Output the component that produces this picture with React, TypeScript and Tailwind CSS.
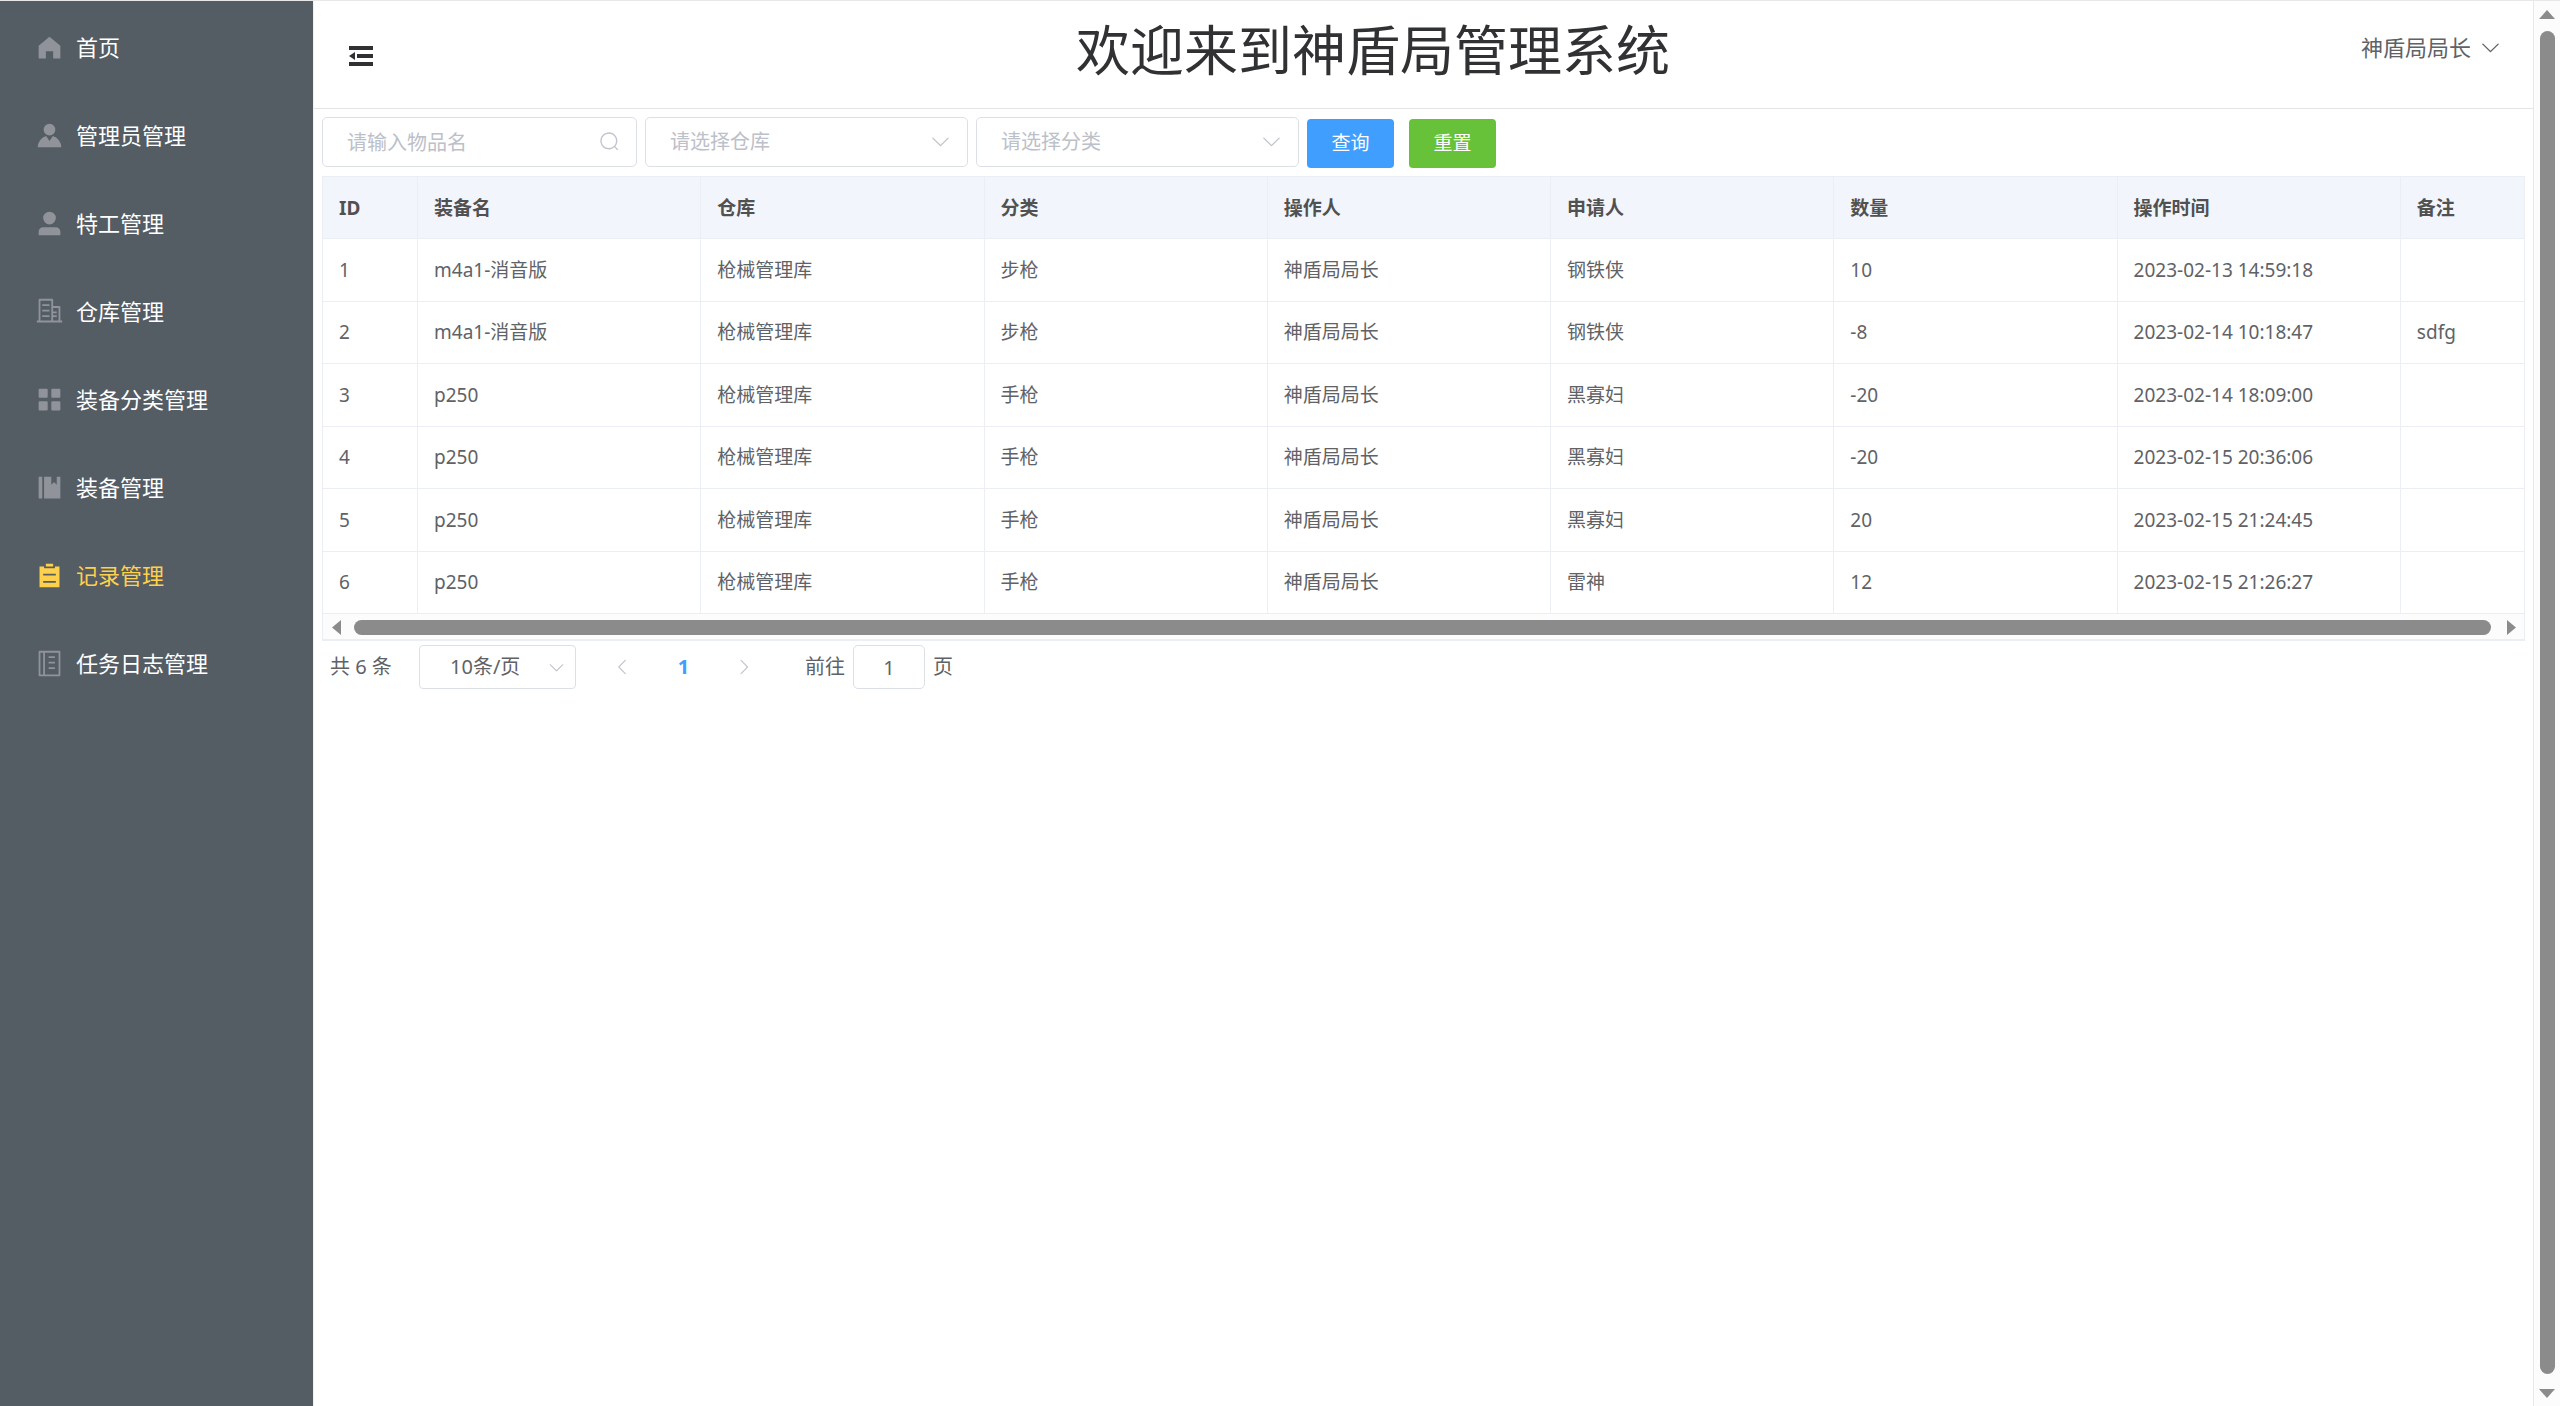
import type { ReactNode } from 'react';

const paths = {
  home: 'M512 128 128 447.936V896h255.936V640H640v256h255.936V447.936z',
  avatar:
    'M628.736 528.896A416 416 0 0 1 928 928H96a415.872 415.872 0 0 1 299.264-399.104L512 704zM720 304a208 208 0 1 1-416 0 208 208 0 0 1 416 0',
  user: 'M288 320a224 224 0 1 0 448 0 224 224 0 1 0-448 0m544 608H160a32 32 0 0 1-32-32v-96a160 160 0 0 1 160-160h448a160 160 0 0 1 160 160v96a32 32 0 0 1-32 32z',
  office:
    'M192 128v704h384V128zm-32-64h448a32 32 0 0 1 32 32v768a32 32 0 0 1-32 32H160a32 32 0 0 1-32-32V96a32 32 0 0 1 32-32M256 256h256v64H256zm0 192h256v64H256zm0 192h256v64H256zm384-128h128v64H640zm0 128h128v64H640zM64 832h896v64H64zM640 384v448h192V384zm-32-64h256a32 32 0 0 1 32 32v512a32 32 0 0 1-32 32H608a32 32 0 0 1-32-32V352a32 32 0 0 1 32-32',
  menu: 'M160 448a32 32 0 0 1-32-32V160a32 32 0 0 1 32-32h256a32 32 0 0 1 32 32V416a32 32 0 0 1-32 32zm448 0a32 32 0 0 1-32-32V160a32 32 0 0 1 32-32h256a32 32 0 0 1 32 32V416a32 32 0 0 1-32 32zM160 896a32 32 0 0 1-32-32V608a32 32 0 0 1 32-32h256a32 32 0 0 1 32 32v256a32 32 0 0 1-32 32zm448 0a32 32 0 0 1-32-32V608a32 32 0 0 1 32-32h256a32 32 0 0 1 32 32v256a32 32 0 0 1-32 32z',
  management: 'M576 128v288l96-96 96 96V128h128v768H320V128zm-448 0h128v768H128z',
  list: 'M704 192h160v736H160V192h160v64h384zM288 512h448v-64H288zm0 256h448v-64H288zm96-576V96h256v96z',
  memo: 'M160 64h704a32 32 0 0 1 32 32v832a32 32 0 0 1-32 32H160a32 32 0 0 1-32-32V96a32 32 0 0 1 32-32M192 128v768h96V128zM352 128v768h480V128zM480 256h224v64H480zM480 448h224v64H480zM480 640h224v64H480z',
  fold: 'M896 192H128v128h768zm0 256H384v128h512zm0 256H128v128h768zM320 384 128 512l192 128z',
  down: 'M831.872 340.864 512 652.672 192.128 340.864a30.592 30.592 0 0 0-42.752 0 29.12 29.12 0 0 0 0 41.6L489.664 714.24a32 32 0 0 0 44.672 0l340.288-331.712a29.12 29.12 0 0 0 0-41.728 30.592 30.592 0 0 0-42.752 0z',
  left: 'M609.408 149.376 277.76 489.6a32 32 0 0 0 0 44.672l331.648 340.352a29.12 29.12 0 0 0 41.728 0 30.592 30.592 0 0 0 0-42.752L339.264 511.936l311.872-319.872a30.592 30.592 0 0 0 0-42.688 29.12 29.12 0 0 0-41.728 0z',
  right:
    'M340.864 149.312a30.592 30.592 0 0 0 0 42.752L652.736 512 340.864 831.872a30.592 30.592 0 0 0 0 42.752 29.12 29.12 0 0 0 41.728 0L714.24 534.336a32 32 0 0 0 0-44.672L382.592 149.376a29.12 29.12 0 0 0-41.728 0z',
  search:
    'm795.904 750.72 124.992 124.928a32 32 0 0 1-45.248 45.248L750.656 795.904a416 416 0 1 1 45.248-45.184M480 832a352 352 0 1 0 0-704 352 352 0 0 0 0 704',
};

type IconName = keyof typeof paths;

const Icon = ({ name, className }: { name: IconName; className: string }) => (
  <svg viewBox="0 0 1024 1024" fill="currentColor" fillRule={name === 'memo' ? 'evenodd' : 'nonzero'} className={className} aria-hidden="true">
    <path d={paths[name]} />
  </svg>
);

const menu: { icon: IconName; label: string }[] = [
  { icon: 'home', label: '首页' },
  { icon: 'avatar', label: '管理员管理' },
  { icon: 'user', label: '特工管理' },
  { icon: 'office', label: '仓库管理' },
  { icon: 'menu', label: '装备分类管理' },
  { icon: 'management', label: '装备管理' },
  { icon: 'list', label: '记录管理' },
  { icon: 'memo', label: '任务日志管理' },
];

const columns = ['ID', '装备名', '仓库', '分类', '操作人', '申请人', '数量', '操作时间', '备注'];

const records = [
  ['1', 'm4a1-消音版', '枪械管理库', '步枪', '神盾局局长', '钢铁侠', '10', '2023-02-13 14:59:18', ''],
  ['2', 'm4a1-消音版', '枪械管理库', '步枪', '神盾局局长', '钢铁侠', '-8', '2023-02-14 10:18:47', 'sdfg'],
  ['3', 'p250', '枪械管理库', '手枪', '神盾局局长', '黑寡妇', '-20', '2023-02-14 18:09:00', ''],
  ['4', 'p250', '枪械管理库', '手枪', '神盾局局长', '黑寡妇', '-20', '2023-02-15 20:36:06', ''],
  ['5', 'p250', '枪械管理库', '手枪', '神盾局局长', '黑寡妇', '20', '2023-02-15 21:24:45', ''],
  ['6', 'p250', '枪械管理库', '手枪', '神盾局局长', '雷神', '12', '2023-02-15 21:26:27', ''],
];

const Sidebar = () => (
  <aside className="w-[313px] shrink-0 bg-[#545c64] pt-[2px]">
    <nav>
      {menu.map((item) => {
        const active = item.label === '记录管理';
        return (
          <a
            key={item.label}
            href="#"
            aria-current={active ? 'page' : undefined}
            className={`flex h-[88px] items-center gap-[12px] pl-[35px] text-[22px] ${active ? 'text-[#ffd04b]' : 'text-white'}`}
          >
            <Icon name={item.icon} className={`size-[29px] ${active ? '' : 'text-[#909399]'}`} />
            {item.label}
          </a>
        );
      })}
    </nav>
  </aside>
);

const Header = () => (
  <header className="flex h-[108px] items-start border-b border-[#e4e4e4] px-[31px] text-[#303133]">
    <button type="button" aria-label="折叠菜单" className="mt-[39px] w-[40px]">
      <Icon name="fold" className="size-[32px]" />
    </button>
    <h1 className="flex-1 pt-[13px] text-center text-[54px] leading-[72px]">欢迎来到神盾局管理系统</h1>
    <button type="button" className="mt-[30px] flex items-center gap-[8px] text-[22px] leading-[32px] text-[#606266]">
      神盾局局长
      <Icon name="down" className="size-[23px]" />
    </button>
  </header>
);

const FilterSelect = ({ label }: { label: string }) => (
  <div className="relative w-[323px]">
    <select
      aria-label={label}
      className="h-[50px] w-full appearance-none rounded-[5px] border border-[#dcdfe6] bg-white px-[24px] text-[20px] text-[#bcc0c8]"
    >
      <option>{label}</option>
    </select>
    <Icon name="down" className="pointer-events-none absolute top-[13px] right-[16px] size-[23px] text-[#c0c4cc]" />
  </div>
);

const Filters = () => (
  <form className="flex h-[67px] items-start gap-[8px] pt-[8px]">
    <div className="relative w-[315px]">
      <input
        type="text"
        aria-label="物品名"
        placeholder="请输入物品名"
        className="h-[50px] w-full rounded-[5px] border border-[#dcdfe6] px-[24px] text-[20px] placeholder:text-[#bcc0c8]"
      />
      <Icon name="search" className="pointer-events-none absolute top-[14px] right-[17px] size-[21px] text-[#c0c4cc]" />
    </div>
    <FilterSelect label="请选择仓库" />
    <FilterSelect label="请选择分类" />
    <div className="flex gap-[15px] pt-[2px]">
      <button type="button" className="h-[49px] w-[87px] rounded-[4px] bg-[#409eff] text-[19px] text-white">
        查询
      </button>
      <button type="button" className="h-[49px] w-[87px] rounded-[4px] bg-[#67c23a] text-[19px] text-white">
        重置
      </button>
    </div>
  </form>
);

const RecordTable = () => (
  <div className="overflow-hidden border border-b-2 border-[#ebeef5]">
    <table className="w-full table-fixed border-separate border-spacing-0 text-left text-[19px] text-[#606266]">
      <colgroup>
        {columns.map((c, i) => (
          <col key={c} className={i === 0 ? 'w-[95px]' : i < 8 ? 'w-[12.87%]' : ''} />
        ))}
      </colgroup>
      <thead className="bg-[#f2f5fc] text-[#515151]">
        <tr className="h-[62px]">
          {columns.map((c) => (
            <Cell key={c} head>
              {c}
            </Cell>
          ))}
        </tr>
      </thead>
      <tbody>
        {records.map((row) => (
          <tr key={row[0]} className="odd:h-[63px] even:h-[62px]">
            {row.map((value, i) => (
              <Cell key={columns[i]}>{value}</Cell>
            ))}
          </tr>
        ))}
      </tbody>
    </table>
    <div className="flex h-[25px] items-end bg-[#fcfcfc] pr-[8px] pb-[4px] pl-[9px] text-[#8b8b8b]" aria-hidden="true">
      <svg viewBox="0 0 9 15" fill="currentColor" className="h-[15px] w-[9px]">
        <path d="M9 0v15L0 7.500z" />
      </svg>
      <div className="mr-[16px] ml-[13px] h-[15px] flex-1 rounded-full bg-[#8b8b8b]" />
      <svg viewBox="0 0 9 15" fill="currentColor" className="h-[15px] w-[9px]">
        <path d="M0 0v15l9-7.500z" />
      </svg>
    </div>
  </div>
);

const Cell = ({ head, children }: { head?: boolean; children: ReactNode }) =>
  head ? (
    <th className="border-r border-b border-[#ebeef5] px-[16px] pt-[2px] pb-0 font-bold last:border-r-0">{children}</th>
  ) : (
    <td className="border-r border-b border-[#ebeef5] px-[16px] py-0 last:border-r-0">{children}</td>
  );

const Pagination = () => (
  <div className="flex items-center pt-[4px] pl-[8px] text-[20px] text-[#606266]">
    <span className="w-[89px]">共 6 条</span>
    <div className="relative w-[157px]">
      <select
        aria-label="每页条数"
        className="h-[44px] w-full appearance-none rounded-[4px] border border-[#dcdfe6] bg-white pl-[30px] text-[20px]"
      >
        <option>10条/页</option>
      </select>
      <Icon name="down" className="pointer-events-none absolute top-[13px] right-[10px] size-[19px] text-[#c0c4cc]" />
    </div>
    <button type="button" aria-label="上一页" className="ml-[37px] text-[#c0c4cc]">
      <Icon name="left" className="size-[20px]" />
    </button>
    <button type="button" className="w-[101px] font-bold text-[#409eff]">
      1
    </button>
    <button type="button" aria-label="下一页" className="text-[#c0c4cc]">
      <Icon name="right" className="size-[20px]" />
    </button>
    <label className="ml-[51px] flex items-center gap-[8px]">
      前往
      <input type="text" defaultValue="1" className="h-[44px] w-[72px] rounded-[5px] border border-[#dcdfe6] text-center" />
      页
    </label>
  </div>
);

const PageScrollbar = () => (
  <div className="flex w-[27px] shrink-0 flex-col items-center border-l border-[#e8e8e8] bg-[#fcfcfc] pt-[9px] pb-[8px] text-[#8b8b8b]" aria-hidden="true">
    <svg viewBox="0 0 16 9" fill="currentColor" className="h-[9px] w-[16px]">
      <path d="M0 9h16L8 0z" />
    </svg>
    <div className="mt-[12px] mb-[15px] w-[15px] flex-1 rounded-full bg-[#8b8b8b]" />
    <svg viewBox="0 0 16 9" fill="currentColor" className="h-[9px] w-[16px]">
      <path d="M0 0h16L8 9z" />
    </svg>
  </div>
);

const App = () => {
  return (
    <div className="flex min-h-screen border-t border-[#e8e8e8] bg-white font-['Noto_Sans','Noto_Sans_CJK_SC',sans-serif]">
      <Sidebar />
      <main className="min-w-0 flex-1 border-l border-[#f0f0f0]">
        <Header />
        <div className="px-[8px]">
          <Filters />
          <RecordTable />
          <Pagination />
        </div>
      </main>
      <PageScrollbar />
    </div>
  );
};

export default App;
